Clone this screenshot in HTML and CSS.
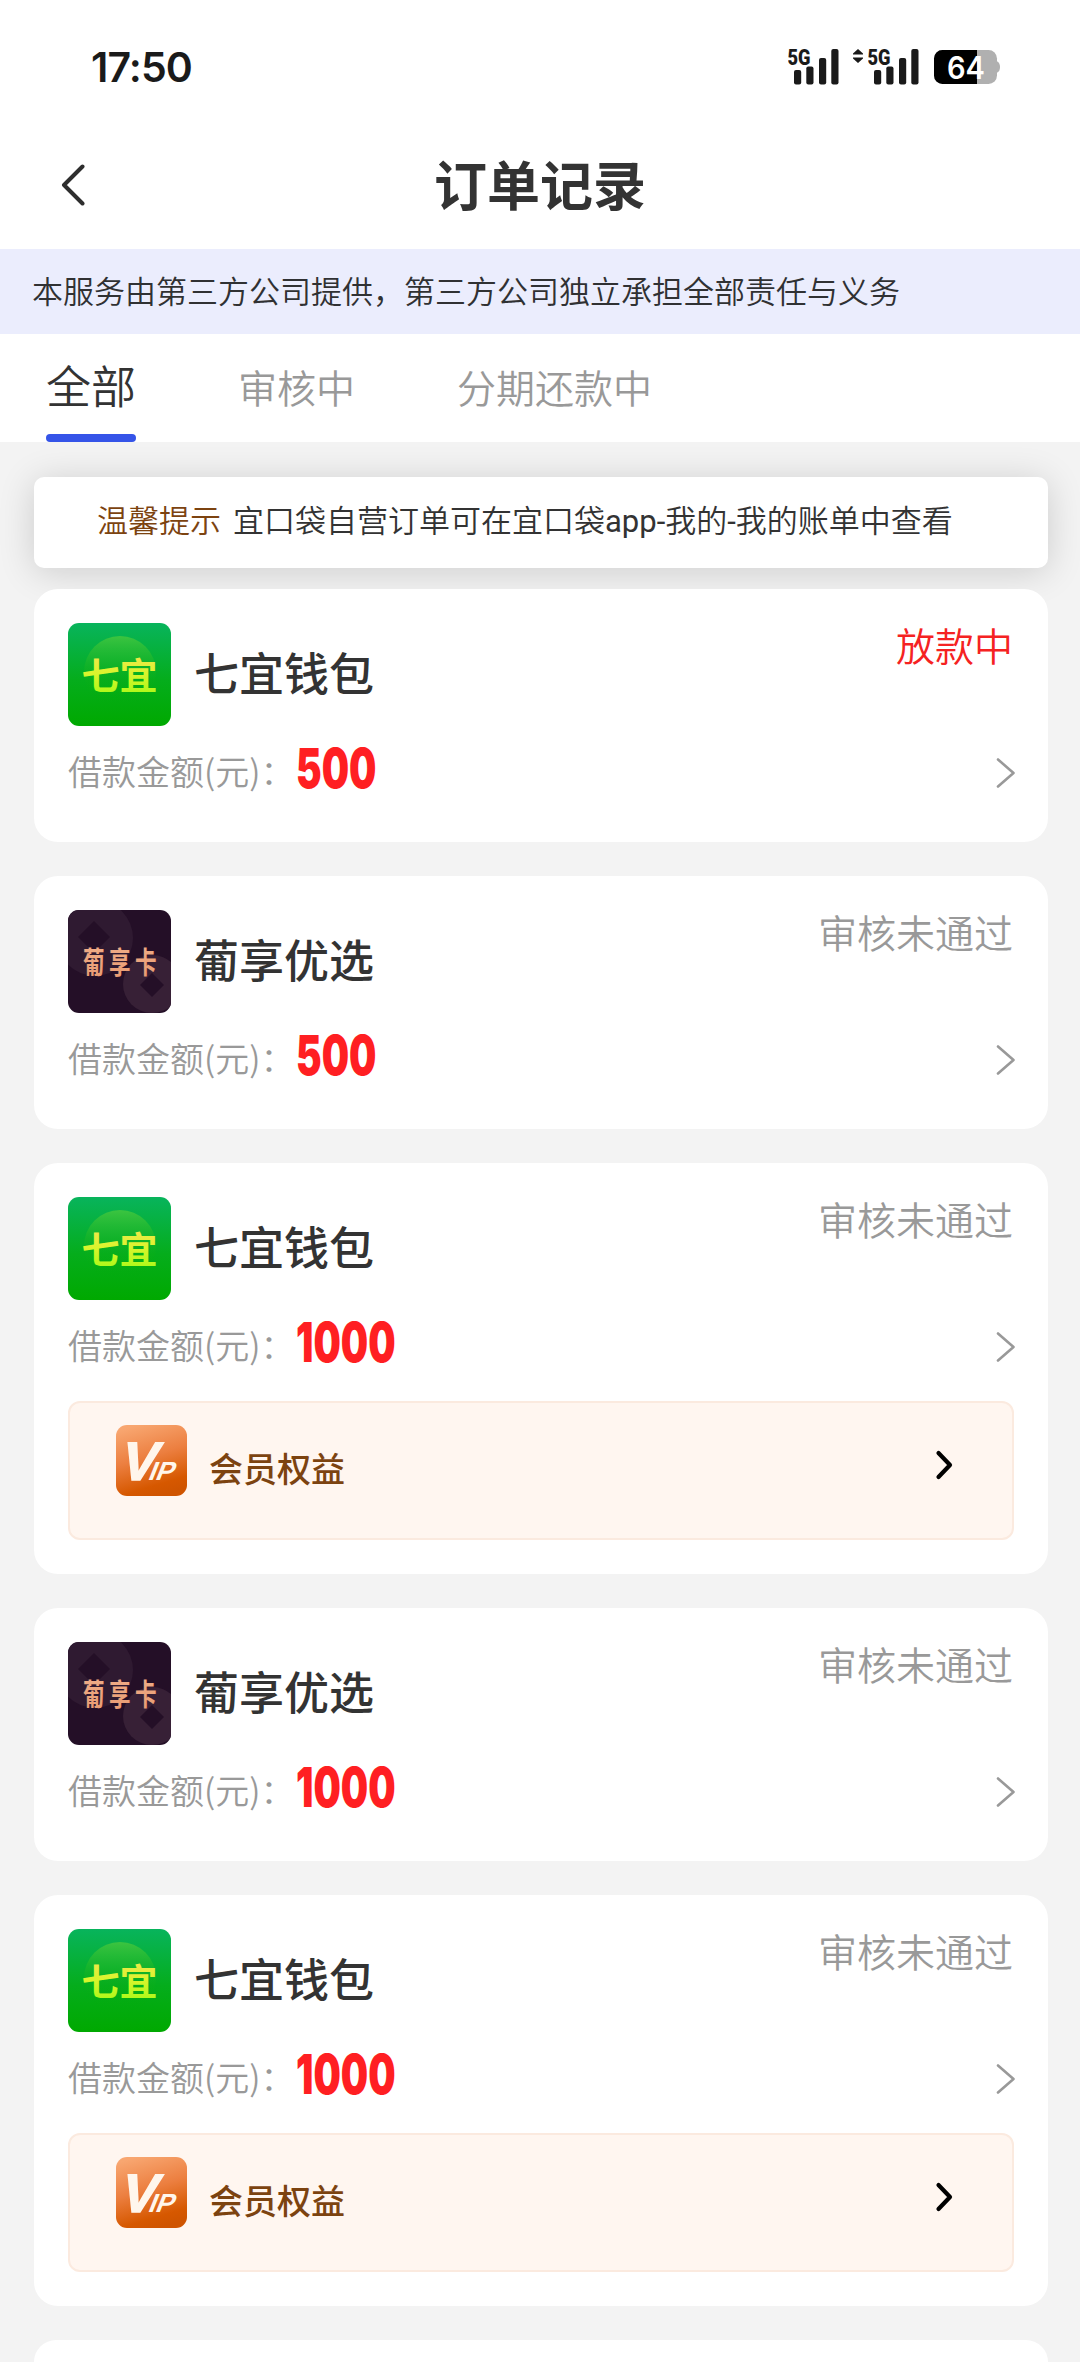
FILE: index.html
```html
<!DOCTYPE html>
<html lang="zh-CN">
<head>
<meta charset="utf-8">
<title>订单记录</title>
<link rel="stylesheet" href="styles.css">
</head>
<body>
<svg class="defs" width="0" height="0" aria-hidden="true">
  <defs>
    <linearGradient id="green" x1="0" y1="0" x2="0" y2="1">
      <stop offset="0" stop-color="#08b45c"/><stop offset=".55" stop-color="#05ad1c"/><stop offset="1" stop-color="#00a900"/>
    </linearGradient>
    <linearGradient id="halo" x1="0" y1="0" x2="0" y2="1">
      <stop offset="0" stop-color="#3cc440"/><stop offset=".6" stop-color="#10b018" stop-opacity=".2"/><stop offset="1" stop-color="#00a900" stop-opacity="0"/>
    </linearGradient>
    <linearGradient id="lime" x1="0" y1="0" x2="0" y2="1">
      <stop offset="0" stop-color="#fbe05a"/><stop offset=".5" stop-color="#d9f52c"/><stop offset="1" stop-color="#9cfa12"/>
    </linearGradient>
    <linearGradient id="copper" x1="0" y1="0" x2="0" y2="1">
      <stop offset="0" stop-color="#f0b08c"/><stop offset="1" stop-color="#e89a70"/>
    </linearGradient>
    <linearGradient id="orange" x1=".3" y1="0" x2=".6" y2="1">
      <stop offset="0" stop-color="#f8a670"/><stop offset=".45" stop-color="#ec7f40"/><stop offset=".85" stop-color="#d65800"/><stop offset="1" stop-color="#cf5400"/>
    </linearGradient>
    <symbol id="logo-qiyi" viewBox="0 0 103 103">
      <rect width="103" height="103" rx="11" fill="url(#green)"/>
      <circle cx="52" cy="49" r="36" fill="url(#halo)"/>
      <text class="qiyi-text" x="13.500" y="67" fill="url(#lime)" textLength="76" lengthAdjust="spacingAndGlyphs">七宜</text>
    </symbol>
    <symbol id="logo-puxiang" viewBox="0 0 103 103">
      <clipPath id="tile"><rect width="103" height="103" rx="11"/></clipPath>
      <g clip-path="url(#tile)">
        <rect width="103" height="103" fill="#240f27"/>
        <circle cx="27" cy="28" r="38" fill="#2f1a31"/>
        <path d="M26 11 42 27 26 43 10 27z" fill="#240f27"/>
        <circle cx="84" cy="74" r="29" fill="#372036"/>
        <path d="M84 63 96 75 84 87 72 75z" fill="#240f27"/>
      </g>
      <g class="puxiang-text" fill="url(#copper)">
        <text transform="translate(15 62.500) scale(.72 1)">葡</text>
        <text transform="translate(41 62.500) scale(.72 1)">享</text>
        <text transform="translate(67 62.500) scale(.72 1)">卡</text>
      </g>
    </symbol>
    <symbol id="logo-vip" viewBox="0 0 71 71">
      <rect width="71" height="71" rx="11" fill="url(#orange)"/>
      <g class="vip-text">
        <text transform="translate(2 55) skewX(-15)" font-size="54" textLength="36" lengthAdjust="spacingAndGlyphs" stroke="#fff6ec" stroke-width="1.500">V</text>
        <text transform="translate(31 55) skewX(-22)" font-size="26" textLength="25" lengthAdjust="spacingAndGlyphs">IP</text>
      </g>
    </symbol>
    <symbol id="arrow" viewBox="0 0 20 30">
      <path d="M2 1.500 17.500 15 2 28.500" fill="none" stroke="#999" stroke-width="2.600" stroke-linecap="round" stroke-linejoin="round"/>
    </symbol>
    <symbol id="arrow-bold" viewBox="0 0 20 30">
      <path d="M3.500 3 15 15 3.500 27" fill="none" stroke="#000" stroke-width="4.200" stroke-linecap="round" stroke-linejoin="round"/>
    </symbol>
    <symbol id="signal" viewBox="0 0 52 38">
      <text class="net-text" x="-.5" y="16.500" textLength="23" lengthAdjust="spacingAndGlyphs">5G</text>
      <g fill="#1a1a1a"><rect x="6" y="22" width="7.200" height="14.500" rx="2"/><rect x="18.300" y="18.500" width="7.200" height="18" rx="2"/><rect x="31" y="10" width="7.200" height="26.500" rx="2"/><rect x="43.300" y="1" width="7.200" height="35.500" rx="2"/></g>
    </symbol>
  </defs>
</svg>

<header class="header">
  <div class="statusbar">
    <span class="time">17:50</span>
    <div class="status-icons">
      <svg class="signal"><use href="#signal"/></svg>
      <svg class="updown" viewBox="0 0 10 14"><path d="M5 0 10 4.500V5.500H0V4.500zM5 14 10 9.500V8.500H0V9.500z" fill="#1a1a1a"/></svg>
      <svg class="signal"><use href="#signal"/></svg>
      <svg class="battery" viewBox="0 0 66 34">
        <path d="M62 11.500h1.500q2.500 1.500 2.500 5.500t-2.500 5.500H62z" fill="#b0b0b0"/>
        <rect width="63" height="34" rx="8.500" fill="#b0b0b0"/>
        <path d="M8.500 0H43V34H8.500A8.500 8.500 0 0 1 0 25.500V8.500A8.500 8.500 0 0 1 8.500 0z" fill="#000"/>
        <text class="battery-text" x="13" y="29" textLength="38" lengthAdjust="spacingAndGlyphs">64</text>
      </svg>
    </div>
  </div>
  <nav class="nav">
    <svg class="back" viewBox="0 0 24 42"><path d="M21.500 2.500 3 21 21.500 39.500" fill="none" stroke="#2e2e2e" stroke-width="4" stroke-linecap="round" stroke-linejoin="round"/></svg>
    <h1 class="title">订单记录</h1>
  </nav>
</header>

<p class="banner">本服务由第三方公司提供，第三方公司独立承担全部责任与义务</p>

<div class="tabs">
  <span class="tab tab-active">全部</span>
  <span class="tab">审核中</span>
  <span class="tab">分期还款中</span>
</div>

<main class="content">
  <div class="notice"><span class="notice-label">温馨提示</span><span>宜口袋自营订单可在宜口袋<span class="latin">app-</span>我的<span class="latin">-</span>我的账单中查看</span></div>

  <section class="card">
    <div class="card-head"><svg class="logo"><use href="#logo-qiyi"/></svg><h2 class="name">七宜钱包</h2><span class="status status-active">放款中</span></div>
    <div class="card-row"><span class="label">借款金额(元)：</span><b class="amount">500</b><svg class="arrow"><use href="#arrow"/></svg></div>
  </section>

  <section class="card">
    <div class="card-head"><svg class="logo"><use href="#logo-puxiang"/></svg><h2 class="name">葡享优选</h2><span class="status">审核未通过</span></div>
    <div class="card-row"><span class="label">借款金额(元)：</span><b class="amount">500</b><svg class="arrow"><use href="#arrow"/></svg></div>
  </section>

  <section class="card">
    <div class="card-head"><svg class="logo"><use href="#logo-qiyi"/></svg><h2 class="name">七宜钱包</h2><span class="status">审核未通过</span></div>
    <div class="card-row"><span class="label">借款金额(元)：</span><b class="amount">1000</b><svg class="arrow"><use href="#arrow"/></svg></div>
    <div class="vip"><svg class="vip-logo"><use href="#logo-vip"/></svg><span class="vip-name">会员权益</span><svg class="vip-arrow"><use href="#arrow-bold"/></svg></div>
  </section>

  <section class="card">
    <div class="card-head"><svg class="logo"><use href="#logo-puxiang"/></svg><h2 class="name">葡享优选</h2><span class="status">审核未通过</span></div>
    <div class="card-row"><span class="label">借款金额(元)：</span><b class="amount">1000</b><svg class="arrow"><use href="#arrow"/></svg></div>
  </section>

  <section class="card">
    <div class="card-head"><svg class="logo"><use href="#logo-qiyi"/></svg><h2 class="name">七宜钱包</h2><span class="status">审核未通过</span></div>
    <div class="card-row"><span class="label">借款金额(元)：</span><b class="amount">1000</b><svg class="arrow"><use href="#arrow"/></svg></div>
    <div class="vip"><svg class="vip-logo"><use href="#logo-vip"/></svg><span class="vip-name">会员权益</span><svg class="vip-arrow"><use href="#arrow-bold"/></svg></div>
  </section>

  <section class="card card-peek"></section>
</main>
</body>
</html>
```
FILE: styles.css
```css
* { box-sizing: border-box; }
body {
  margin: 0;
  width: 1080px;
  height: 2362px;
  overflow: hidden;
  display: flex;
  flex-direction: column;
  background: #f3f3f3;
  color: #303133;
  font-family: "Noto Sans CJK SC", sans-serif;
  font-weight: 350;
}
h1, h2, p { margin: 0; }
svg { display: block; flex: none; }
.defs { position: absolute; }

.header { flex: none; height: 249px; background: #fff; }
.statusbar {
  display: flex;
  justify-content: space-between;
  height: 134px;
  padding: 48px 80px 0 91px;
}
.time {
  font: 600 41px/38px Inter, sans-serif;
  color: #1a1a1a;
  letter-spacing: -.9px;
}
.status-icons { display: flex; height: 38px; }
.signal { width: 52px; height: 38px; overflow: visible; }
.updown { width: 10px; height: 14px; margin: 1px 5px 0 13px; }
.battery { width: 66px; height: 34px; margin: 2px 0 0 14px; overflow: visible; }
.net-text { font: 900 22px Roboto, sans-serif; fill: #1a1a1a; }
.battery-text { font: 600 31px Inter, sans-serif; fill: #fff; }
.nav {
  display: grid;
  grid-template-columns: 24px 1fr 24px;
  align-items: center;
  height: 102px;
  padding: 0 61px;
}
.back { width: 24px; height: 42px; }
.title {
  margin-top: -5px;
  font-size: 53px;
  font-weight: 700;
  line-height: 80px;
  text-align: center;
  color: #333;
}

.banner {
  flex: none;
  height: 85px;
  padding-left: 32px;
  background: #ebedfd;
  font-size: 31px;
  line-height: 81px;
  white-space: nowrap;
}

.tabs {
  flex: none;
  display: flex;
  gap: 102px;
  height: 108px;
  padding-left: 46px;
  background: #fff;
  position: relative;
  z-index: 1;
}
.tab { font-size: 39px; line-height: 104px; color: #999; }
.tab-active {
  display: flex;
  flex-direction: column;
  padding-top: 1px;
  font-size: 45px;
  line-height: 99px;
  color: #333;
}
.tab-active::after {
  content: "";
  height: 8px;
  border-radius: 4px;
  background: #3554e8;
}

.content {
  flex: 1;
  min-height: 0;
  overflow: hidden;
  display: flex;
  flex-direction: column;
  gap: 34px;
  padding: 35px 32px 0 34px;
}
.notice {
  flex: none;
  display: flex;
  gap: 12px;
  height: 91px;
  margin-bottom: -13px;
  padding-left: 63px;
  border-radius: 10px;
  background: #fff;
  box-shadow: 0 4px 36px rgba(0, 0, 0, .16);
  font-family: Roboto, "Noto Sans CJK SC", sans-serif;
  font-size: 31px;
  line-height: 90px;
  white-space: nowrap;
  color: #333;
}
.notice-label { color: #7c4310; }
.latin { font-weight: 400; }

.card {
  flex: none;
  display: flex;
  flex-direction: column;
  min-height: 253px;
  padding: 34px;
  border-radius: 24px;
  background: #fff;
  position: relative;
}
.card-peek {
  flex: 1;
  min-height: 0;
  padding: 0;
  border-radius: 24px 24px 0 0;
}
.card-head { display: flex; height: 103px; }
.logo { width: 103px; height: 103px; }
.qiyi-text { font: 700 37px "Noto Sans CJK SC", sans-serif; }
.puxiang-text { font: 700 30px "Noto Sans CJK SC", sans-serif; }
.name { margin-left: 23px; font-size: 45px; font-weight: 500; line-height: 97px; color: #333; }
.status { margin: 0 1px 0 auto; font-size: 39px; line-height: 42px; color: #999; }
.status-active { color: #f52222; }
.card-row { display: flex; align-items: center; height: 82px; }
.label { width: 228px; padding-top: 7px; font-size: 34px; line-height: 75px; white-space: nowrap; color: #999; }
.amount {
  padding-top: 3px;
  font: 900 55px/79px Inter, sans-serif;
  color: #ff1f22;
  transform: scaleX(.7);
  transform-origin: left;
}
.arrow { width: 20px; height: 30px; margin: 11px -2px 0 auto; }

.vip {
  display: flex;
  height: 139px;
  margin-top: 19px;
  padding: 22px 57px 0 46px;
  border: 2px solid #fbeadf;
  border-radius: 12px;
  background: #fff6f0;
}
.vip-logo { width: 71px; height: 71px; }
.vip-text { font-family: "Liberation Sans", sans-serif; font-weight: 700; fill: #fff6ec; }
.vip-name { margin-left: 22px; font-size: 34px; font-weight: 500; line-height: 85px; color: #7c4310; }
.vip-arrow { width: 20px; height: 30px; margin: 25px 0 0 auto; }
```
